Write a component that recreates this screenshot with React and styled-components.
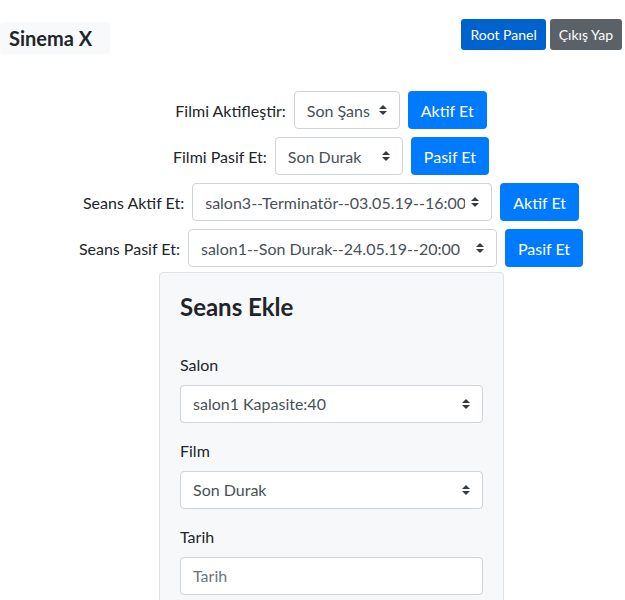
import React from "react";
import styled, { createGlobalStyle } from "styled-components";

const GlobalStyle = createGlobalStyle`
  body {
    margin: 0;
    background: #fff;
    font-family: Lato, "Noto Sans", sans-serif;
    color: #212529;
  }
`;

const arrow =
  "url(\"data:image/svg+xml;charset=utf8,%3Csvg xmlns='http://www.w3.org/2000/svg' viewBox='0 0 4 5'%3E%3Cpath fill='%23343a40' d='M2 0L0 2h4zm0 5L0 3h4z'/%3E%3C/svg%3E\")";

const Page = styled.div`
  width: 625px;
  height: 600px;
  overflow: hidden;
`;

const Header = styled.header`
  display: flex;
  justify-content: space-between;
  align-items: flex-start;
  padding: 19px 3px 0 0;
`;

const Brand = styled.div`
  margin-top: 3px;
  width: 110px;
  height: 32px;
  box-sizing: border-box;
  display: flex;
  align-items: center;
  padding: 0 9px;
  background: #f8f9fa;
  border-radius: 4px;
  font-size: 20px;
  font-weight: 700;
`;

const HeaderActions = styled.div`
  display: flex;
  gap: 4px;
`;

const SmallButton = styled.button`
  height: 31px;
  padding: 0 9px;
  border: none;
  border-radius: 3px;
  font-family: inherit;
  font-size: 14px;
  color: #fff;
  background: ${(p) => (p.$variant === "secondary" ? "#5a6268" : "#0062cc")};
`;

const Rows = styled.div`
  display: flex;
  flex-direction: column;
  align-items: center;
  gap: 8px;
  margin-top: 37px;
  padding-left: 37px;
`;

const Row = styled.div`
  display: flex;
  align-items: center;
  gap: 8px;
`;

const RowLabel = styled.label`
  font-size: 16px;
`;

const Select = styled.select`
  appearance: none;
  height: 38px;
  width: ${(p) => p.$w || "100%"};
  padding: 0 26px 0 12px;
  border: 1px solid #ced4da;
  border-radius: 4px;
  background: #fff ${arrow} no-repeat right 12px center / 8px 10px;
  font-family: inherit;
  font-size: 16px;
  color: #495057;
`;

const Button = styled.button`
  height: 38px;
  padding: 0 13px;
  border: none;
  border-radius: 4px;
  background: #007bff;
  color: #fff;
  font-family: inherit;
  font-size: 16px;
`;

const Card = styled.section`
  width: 345px;
  margin: 5px 0 0 159px;
  padding: 20px 20px 20px;
  box-sizing: border-box;
  background: #f7f8fa;
  border: 1px solid #dee2e6;
  border-radius: 4px;
`;

const CardTitle = styled.h4`
  margin: 0 0 31px;
  font-size: 24px;
  font-weight: 700;
  line-height: 1.2;
`;

const Field = styled.div`
  display: flex;
  flex-direction: column;
  margin-bottom: 16px;
`;

const FieldLabel = styled.label`
  font-size: 16px;
  line-height: 24px;
  margin-bottom: 8px;
`;

const Input = styled.input`
  height: 38px;
  padding: 0 12px;
  box-sizing: border-box;
  border: 1px solid #ced4da;
  border-radius: 4px;
  font-family: inherit;
  font-size: 16px;
  color: #495057;
  &::placeholder {
    color: #6c757d;
  }
`;

const rows = [
  { label: "Filmi Aktifleştir:", value: "Son Şans", w: "106px", action: "Aktif Et" },
  { label: "Filmi Pasif Et:", value: "Son Durak", w: "128px", action: "Pasif Et" },
  {
    label: "Seans Aktif Et:",
    value: "salon3--Terminatör--03.05.19--16:00",
    w: "300px",
    action: "Aktif Et",
  },
  {
    label: "Seans Pasif Et:",
    value: "salon1--Son Durak--24.05.19--20:00",
    w: "309px",
    action: "Pasif Et",
  },
];

export default function App() {
  return (
    <Page>
      <GlobalStyle />
      <Header>
        <Brand>Sinema X</Brand>
        <HeaderActions>
          <SmallButton>Root Panel</SmallButton>
          <SmallButton $variant="secondary">Çıkış Yap</SmallButton>
        </HeaderActions>
      </Header>

      <Rows>
        {rows.map((r) => (
          <Row key={r.label}>
            <RowLabel>{r.label}</RowLabel>
            <Select $w={r.w} defaultValue={r.value}>
              <option>{r.value}</option>
            </Select>
            <Button>{r.action}</Button>
          </Row>
        ))}
      </Rows>

      <Card>
        <CardTitle>Seans Ekle</CardTitle>
        <Field>
          <FieldLabel>Salon</FieldLabel>
          <Select defaultValue="salon1 Kapasite:40">
            <option>salon1 Kapasite:40</option>
          </Select>
        </Field>
        <Field>
          <FieldLabel>Film</FieldLabel>
          <Select defaultValue="Son Durak">
            <option>Son Durak</option>
          </Select>
        </Field>
        <Field>
          <FieldLabel>Tarih</FieldLabel>
          <Input placeholder="Tarih" />
        </Field>
      </Card>
    </Page>
  );
}
